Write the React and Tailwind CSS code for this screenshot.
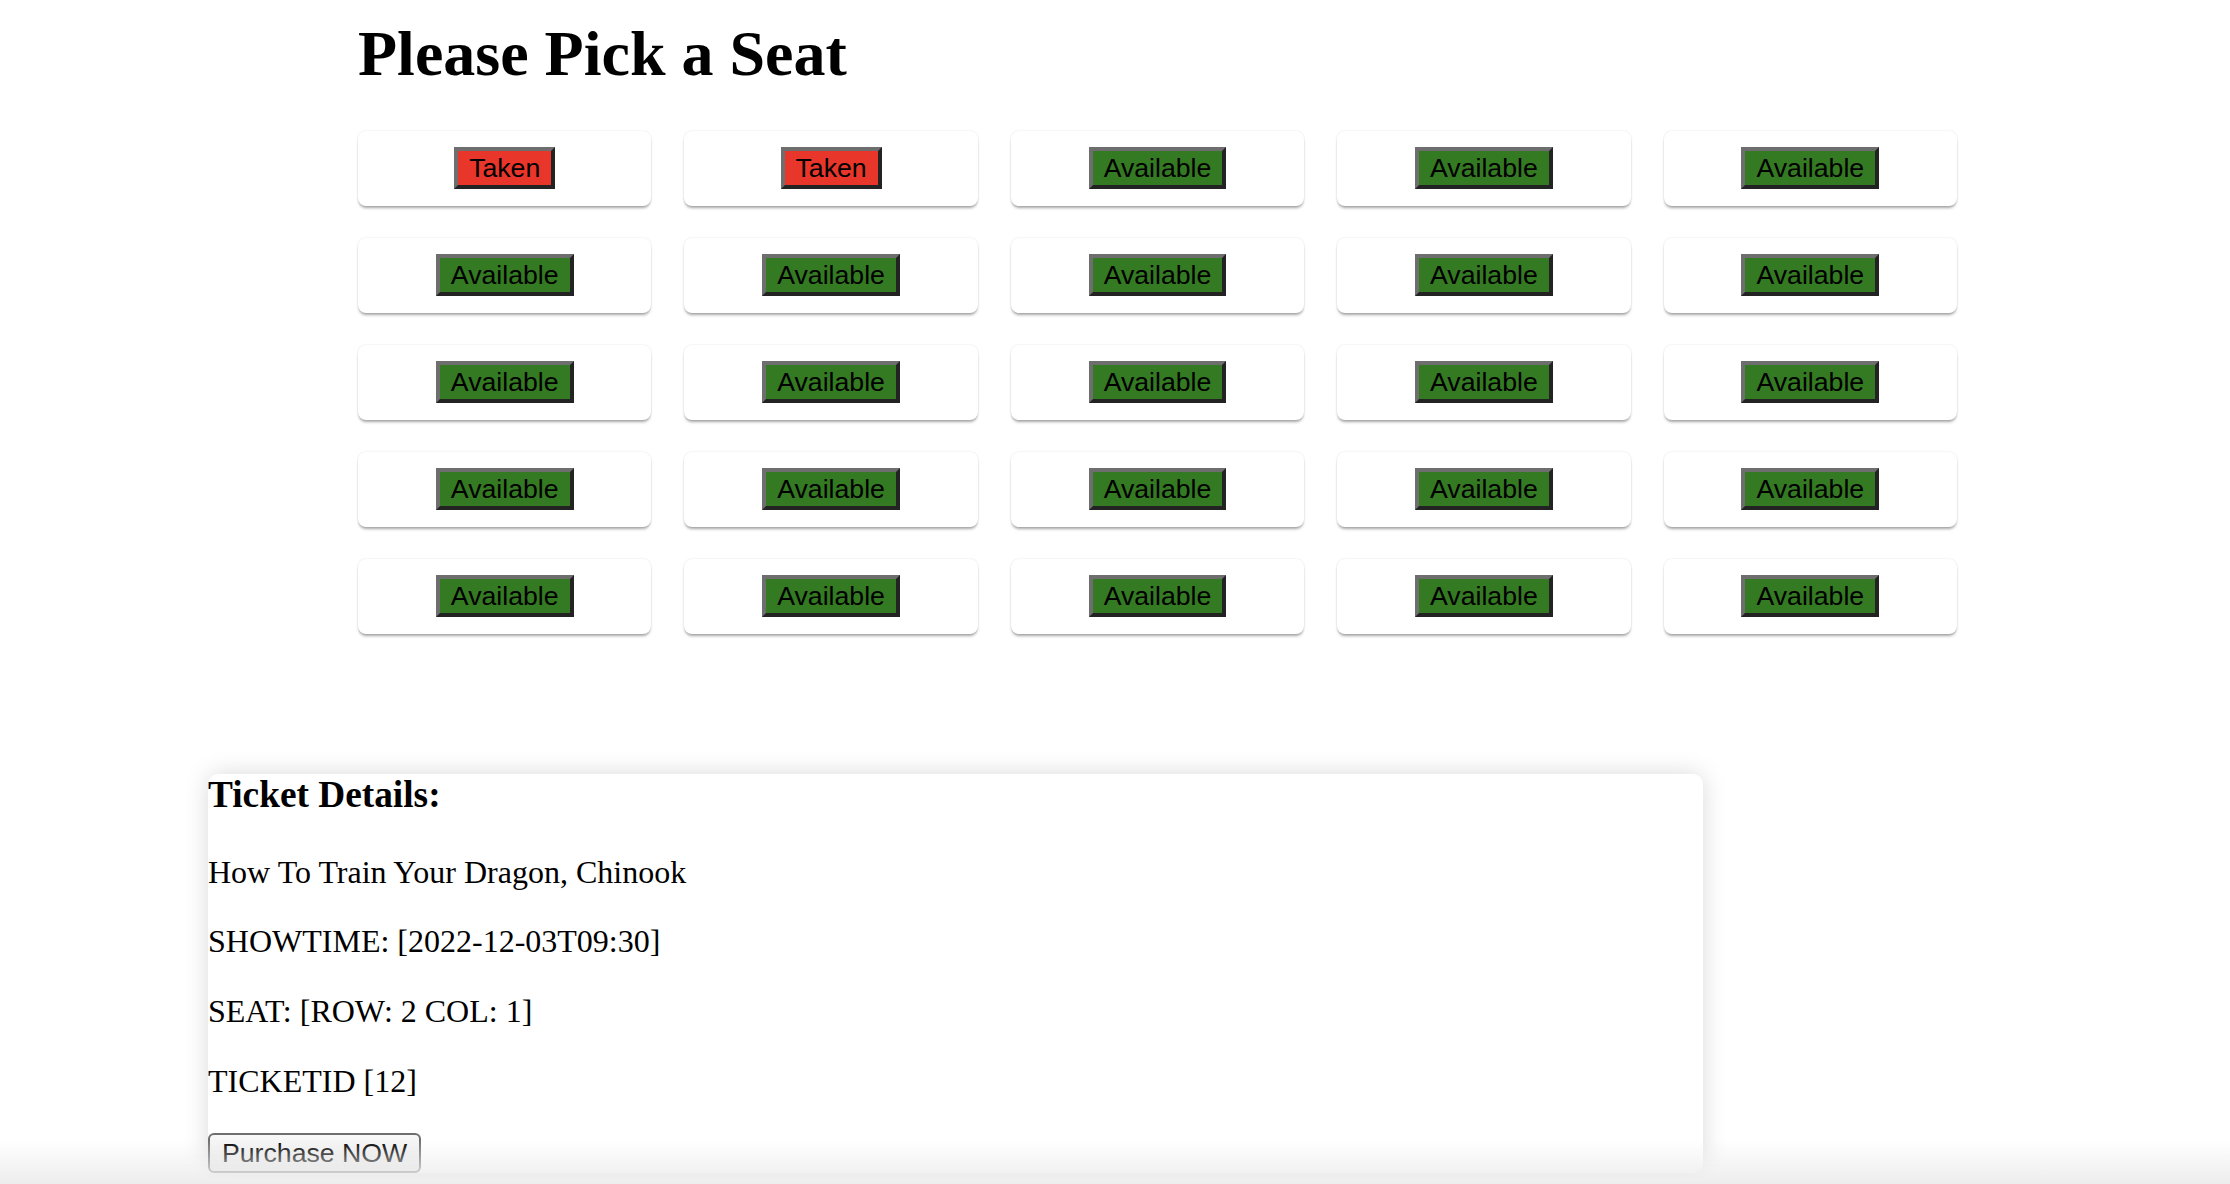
const seats = [
  ['taken', 'taken', 'free', 'free', 'free'],
  ['free', 'free', 'free', 'free', 'free'],
  ['free', 'free', 'free', 'free', 'free'],
  ['free', 'free', 'free', 'free', 'free'],
  ['free', 'free', 'free', 'free', 'free'],
]

function SeatButton({ taken }) {
  return (
    <button
      className={
        'font-["Liberation_Sans",Arial,sans-serif] text-[26.67px] leading-[1.15] text-black px-[11px] py-[2px] border-[4px] border-t-[#6e6e6e] border-l-[#6e6e6e] border-b-[#232323] border-r-[#232323] ' +
        (taken ? 'bg-[#e9362b]' : 'bg-[#347a22]')
      }
    >
      {taken ? 'Taken' : 'Available'}
    </button>
  )
}

export default function App() {
  return (
    <div className="min-h-screen bg-white text-black font-['Liberation_Serif','Times_New_Roman',serif] pl-[208px] overflow-hidden">

      {/* Seat picker */}
      <div className="ml-[150px] w-[1599px]">
        <h1 className="text-[64px] font-bold leading-[1.15] pt-[17px] mb-[40px]">Please Pick a Seat</h1>

        <div className="grid grid-cols-5 gap-x-[33px] gap-y-[32px]">
          {seats.flatMap((row, r) =>
            row.map((s, c) => (
              <div
                key={r + '-' + c}
                className="h-[75px] bg-white rounded-[8px] flex items-center justify-center shadow-[0_0_2px_rgba(0,0,0,0.12),0_3px_3px_-1px_rgba(0,0,0,0.35)]"
              >
                <SeatButton taken={s === 'taken'} />
              </div>
            ))
          )}
        </div>
      </div>

      {/* Ticket details */}
      <div className="mt-[140px] w-[1495px] bg-white rounded-[10px] shadow-[0_0_24px_rgba(0,0,0,0.15)]">
        <h3 className="text-[37.33px] font-bold leading-[1.15] mb-[37px]">Ticket Details:</h3>
        <p className="text-[32px] leading-[1.15] mb-[33px]">How To Train Your Dragon, Chinook</p>
        <p className="text-[32px] leading-[1.15] mb-[33px]">SHOWTIME: [2022-12-03T09:30]</p>
        <p className="text-[32px] leading-[1.15] mb-[33px]">SEAT: [ROW: 2 COL: 1]</p>
        <p className="text-[32px] leading-[1.15] mb-[33px]">TICKETID [12]</p>
        <button className="block font-['Liberation_Sans',Arial,sans-serif] text-[26.67px] leading-[1.15] text-black px-[12px] py-[3px] border-2 border-[#6f6f6f] rounded-[6px] bg-linear-to-b from-[#f8f8f8] to-[#e8e8e8]">
          Purchase NOW
        </button>
      </div>

      {/* bottom fade */}
      <div className="fixed inset-x-0 bottom-0 h-[44px] pointer-events-none bg-linear-to-b from-transparent to-[#ededed]" />
    </div>
  )
}
